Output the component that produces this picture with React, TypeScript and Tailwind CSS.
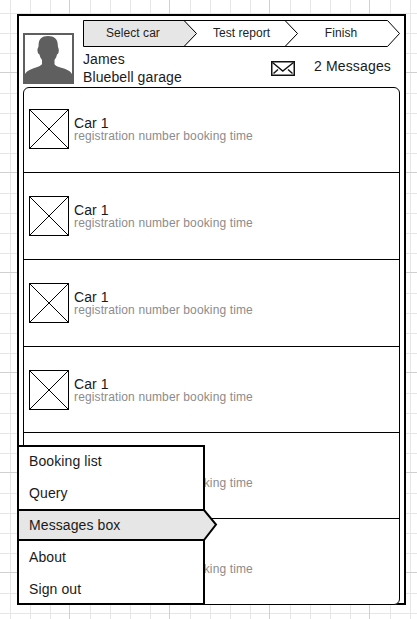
import React from "react";

function Grid() {
  return (
    <svg className="absolute inset-0" width="417" height="619" shapeRendering="crispEdges">
      <defs>
        <pattern id="grid" x="69" y="72" width="100" height="100" patternUnits="userSpaceOnUse">
          <path d="M21.5 0V100M41.5 0V100M61.5 0V100M81.5 0V100M0 21.5H100M0 41.5H100M0 61.5H100M0 81.5H100" stroke="#e6e6e6" />
          <path d="M0.5 0V100M0 0.5H100" stroke="#d0d0d0" />
        </pattern>
      </defs>
      <rect width="417" height="619" fill="url(#grid)" />
    </svg>
  );
}

function Avatar() {
  return (
    <svg className="mt-[17px] shrink-0" width="51" height="51" viewBox="0 0 51 51">
      <rect x="1" y="1" width="49" height="49" fill="#fff" stroke="#5f5f5f" strokeWidth="2" />
      <path
        d="M25 3C19 3 15.6 6 15.6 12C15.6 15 14.2 15 14.5 18C14.8 20.5 15.5 21 16.5 21.5C17 24 18 25.5 19 27V31C18 33 14 34 10 35.5C5 37.500 2 39 1.5 43V50H49.5V43C49 39 46 37.500 41 35.5C36 34 32 33 31.5 31V27C32.5 25.5 33.5 24 34 21.5C35 21 35.5 20.5 35.8 18C36 15 34.8 15 34.8 12C34.8 6 31 3 25 3Z"
        fill="#5f5f5f"
      />
    </svg>
  );
}

const steps = [
  { label: "Select car", width: "w-[101px]", points: "0.5,0.5 101.5,0.5 114,13.5 101.5,26.5 0.5,26.5", fill: "#e6e6e6", pad: "pr-px" },
  { label: "Test report", width: "w-[101px]", points: "0,0.5 101.5,0.5 114,13.5 101.5,26.5 0,26.5 12.5,13.5", fill: "#ffffff", pad: "pl-[14px]" },
  { label: "Finish", width: "w-[115px]", points: "0,0.5 102.5,0.5 114.5,13.5 102.5,26.5 0,26.5 12.5,13.5", fill: "#ffffff", pad: "pr-[3px]" },
];

function Steps() {
  return (
    <div className="flex h-[27px] text-[12px] leading-[26px] tracking-[0.05px] text-[#222]">
      {steps.map((s) => (
        <div key={s.label} className={`relative shrink-0 text-center ${s.width} ${s.pad}`}>
          <svg className="absolute left-0 top-0 overflow-visible" width="115" height="27">
            <polygon points={s.points} fill={s.fill} stroke="#000" />
          </svg>
          <span className="relative">{s.label}</span>
        </div>
      ))}
    </div>
  );
}

function Envelope() {
  return (
    <svg width="24" height="15" viewBox="0 0 24 15" fill="none" stroke="#111">
      <rect x="0.75" y="0.75" width="22.5" height="13.5" fill="#fff" strokeWidth="1.5" />
      <path d="M1.5 1.5L11.8 10L22.5 1.5M2.5 12.5L7 8.5M21.5 12.5L17 8.5" strokeWidth="1.4" />
    </svg>
  );
}

function Placeholder() {
  return (
    <svg className="shrink-0" width="40" height="40" fill="#fff" stroke="#000">
      <rect x="0.5" y="0.5" width="39" height="39" />
      <path d="M0.5 0.5L39.5 39.5M39.5 0.5L0.5 39.5" />
    </svg>
  );
}

const rows = [
  "h-[85px] pt-[21px] border-b",
  "h-[87px] pt-[23px] border-b",
  "h-[87px] pt-[23px] border-b",
  "h-[86px] pt-[23px] border-b",
  "h-[86px] pt-[23px] border-b",
  "h-[85px] pt-[23px]",
];

function CarList() {
  return (
    <div className="ml-1 h-[518px] w-[377px] shrink-0 overflow-hidden rounded-[6px] border border-black bg-white">
      {rows.map((row, i) => (
        <div key={i} className={`flex border-black pl-[5px] ${row}`}>
          <Placeholder />
          <div className="pl-[5px] pt-[7px]">
            <div className="h-[13px] text-[14px] leading-[14px] tracking-[0.1px] text-[#1a1a1a]">Car 1</div>
            <div className="text-[12px] leading-[14px] tracking-[0.13px] text-[#8c8c8c]">registration number booking time</div>
          </div>
        </div>
      ))}
    </div>
  );
}

const items = ["Booking list", "Query", "Messages box", "About", "Sign out"];

function Menu() {
  return (
    <nav className="absolute left-[17px] top-[445px] h-[160px] w-[188px] border-2 border-black bg-white text-[14px] leading-[32px] tracking-[0.1px] text-[#1a1a1a]">
      <svg className="absolute -left-0.5 top-[62px]" width="202" height="32">
        <polygon points="1,1 187,1 199,15.5 187,31 1,31" fill="#e6e6e6" stroke="#000" strokeWidth="2" />
      </svg>
      <ul className="relative -mt-0.5 pl-[10px]">
        {items.map((item) => (
          <li key={item} className="h-8">{item}</li>
        ))}
      </ul>
    </nav>
  );
}

export default function App() {
  return (
    <div className="relative h-[619px] w-[417px] overflow-hidden bg-white pl-[17px] pt-[14px] font-['Liberation_Sans',Arial,sans-serif]">
      <Grid />
      <main className="relative flex h-[591px] w-[389px] flex-col border-2 border-black bg-white">
        <header className="flex h-[71px] shrink-0 pl-1">
          <Avatar />
          <div className="ml-[9px] w-[318px] pt-1">
            <Steps />
            <div className="flex text-[14px] tracking-[0.1px] text-[#1a1a1a]">
              <div className="w-[188px] pt-[3px] leading-[18px]">
                <p>James</p>
                <p>Bluebell garage</p>
              </div>
              <div className="flex pt-[14px]">
                <Envelope />
              </div>
              <p className="pl-[19px] pt-[10px] leading-[18px] tracking-[0.15px]">2 Messages</p>
            </div>
          </div>
        </header>
        <CarList />
      </main>
      <Menu />
    </div>
  );
}
